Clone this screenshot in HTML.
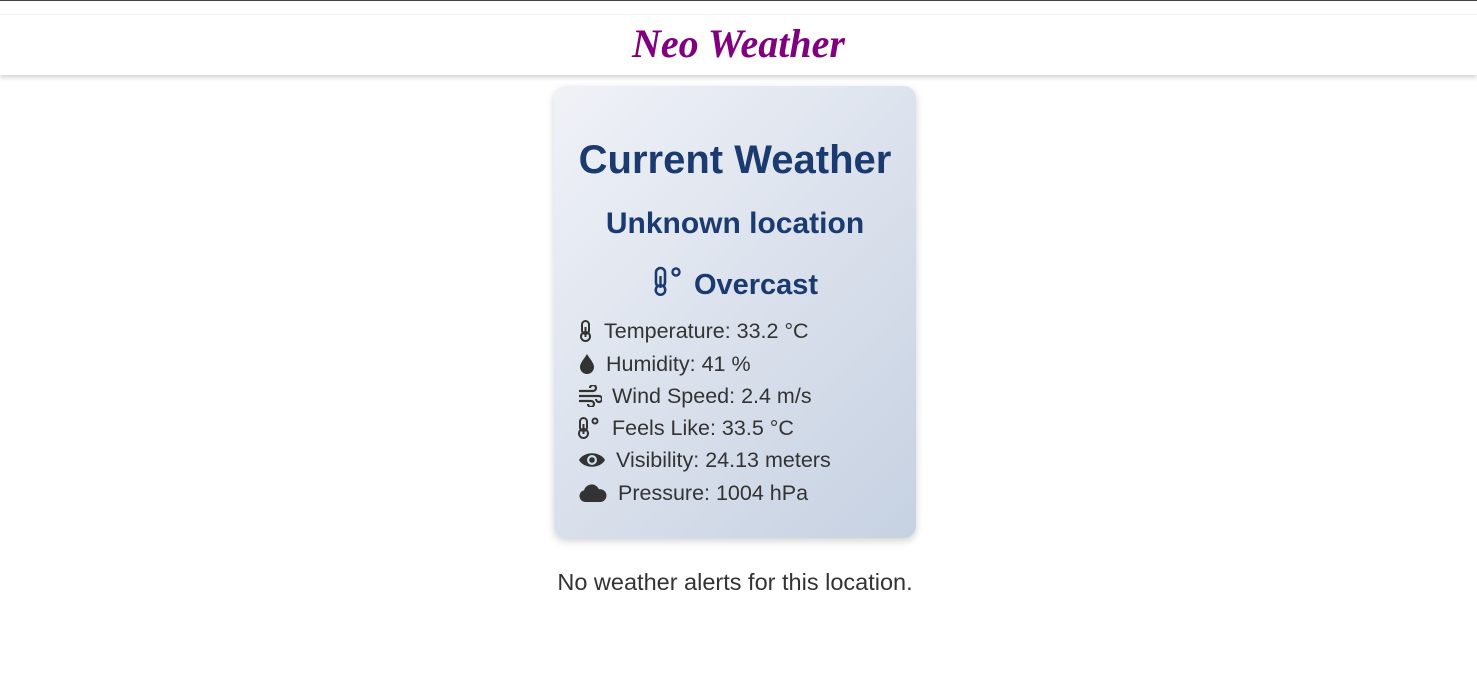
<!DOCTYPE html>
<html><head><style>
body{margin:0;background:#fff;font-family:"Liberation Sans",Arial,sans-serif;width:1477px;height:679px;overflow:hidden;position:relative}
.topline{position:absolute;top:0;left:0;width:100%;height:1px;background:#444}
.header{position:absolute;top:14px;left:0;width:100%;height:60px;background:#fff;box-shadow:0 3px 4px rgba(0,0,0,.15);border-top:1px solid #f2f2f2}
.logo{position:absolute;left:0;width:100%;top:5px;text-align:center;font-family:"Liberation Serif",serif;font-style:italic;font-weight:bold;font-size:40px;color:#800080}
.card{position:absolute;left:554px;top:86px;width:362px;height:452px;border-radius:12px;background:linear-gradient(135deg,#f0f2f7 0%,#c6d1e2 100%);box-shadow:0 3px 8px rgba(0,0,0,.18)}
.h{position:absolute;left:0;width:100%;text-align:center;font-weight:bold;color:#1b3a70}
.row{position:absolute;left:24px;font-size:21.5px;color:#333;display:flex;align-items:center;height:24px}
.row svg{margin-right:10px}
.alert{position:absolute;top:569px;left:0;width:1470px;text-align:center;font-size:23.5px;color:#333}
</style></head><body>
<div class="topline"></div>
<div class="header"><div class="logo">Neo Weather</div></div>
<div class="card">
<div class="h" style="top:52px;font-size:40px">Current Weather</div>
<div class="h" style="top:121px;font-size:30px">Unknown location</div>
<div class="h" style="top:180px;font-size:29px"><svg width="34" height="32" viewBox="0 0 34 32" style="vertical-align:-4px"><rect x="4" y="2" width="9" height="19" rx="4.5" fill="none" stroke="#1b3a70" stroke-width="2.6"/><circle cx="8.5" cy="24" r="6" fill="#1b3a70"/><circle cx="8.5" cy="24" r="3.5" fill="#dde3ee"/><line x1="8.5" y1="10" x2="8.5" y2="22" stroke="#1b3a70" stroke-width="2.4"/><circle cx="24" cy="6" r="3.5" fill="none" stroke="#1b3a70" stroke-width="2.4"/></svg> Overcast</div>
<div class="row" style="top:233px"><svg width="16" height="22" viewBox="0 0 16 22"><rect x="4" y="1" width="7" height="13" rx="3.5" fill="none" stroke="#333" stroke-width="2"/><circle cx="7.5" cy="16.5" r="4.5" fill="none" stroke="#333" stroke-width="2"/><line x1="7.5" y1="7" x2="7.5" y2="17" stroke="#333" stroke-width="2"/></svg>Temperature: 33.2 °C</div>
<div class="row" style="top:266px"><svg width="18" height="22" viewBox="0 0 18 22"><path d="M9 1 C6 6 2 10 2 14 a7 7 0 0 0 14 0 C16 10 12 6 9 1Z" fill="#333"/></svg>Humidity: 41 %</div>
<div class="row" style="top:298px"><svg width="24" height="22" viewBox="0 0 24 22"><path d="M1 6h14a3 3 0 1 0-3-3M1 11h20a3 3 0 1 1-3 3M1 16h12a3 3 0 1 1-3 3" fill="none" stroke="#333" stroke-width="2.2"/></svg>Wind Speed: 2.4 m/s</div>
<div class="row" style="top:330px"><svg width="24" height="22" viewBox="0 0 24 22"><rect x="2" y="1" width="7" height="13" rx="3.5" fill="none" stroke="#333" stroke-width="2"/><circle cx="5.5" cy="16.5" r="4.5" fill="none" stroke="#333" stroke-width="2"/><line x1="5.5" y1="7" x2="5.5" y2="17" stroke="#333" stroke-width="2"/><circle cx="17" cy="4" r="2.5" fill="none" stroke="#333" stroke-width="2"/></svg>Feels Like: 33.5 °C</div>
<div class="row" style="top:362px"><svg width="28" height="22" viewBox="0 0 28 22"><path d="M1 11 C6 2 22 2 27 11 C22 20 6 20 1 11Z" fill="#333"/><circle cx="14" cy="11" r="5" fill="#d5dce9"/><circle cx="14" cy="11" r="2.8" fill="#333"/></svg>Visibility: 24.13 meters</div>
<div class="row" style="top:395px"><svg width="30" height="22" viewBox="0 0 30 22"><path d="M7 20 a6 6 0 0 1 -1-11.8 a8 8 0 0 1 15-1 a6 6 0 0 1 2 12.8Z" fill="#333"/></svg>Pressure: 1004 hPa</div>
</div>
<div class="alert">No weather alerts for this location.</div>
</body></html>
